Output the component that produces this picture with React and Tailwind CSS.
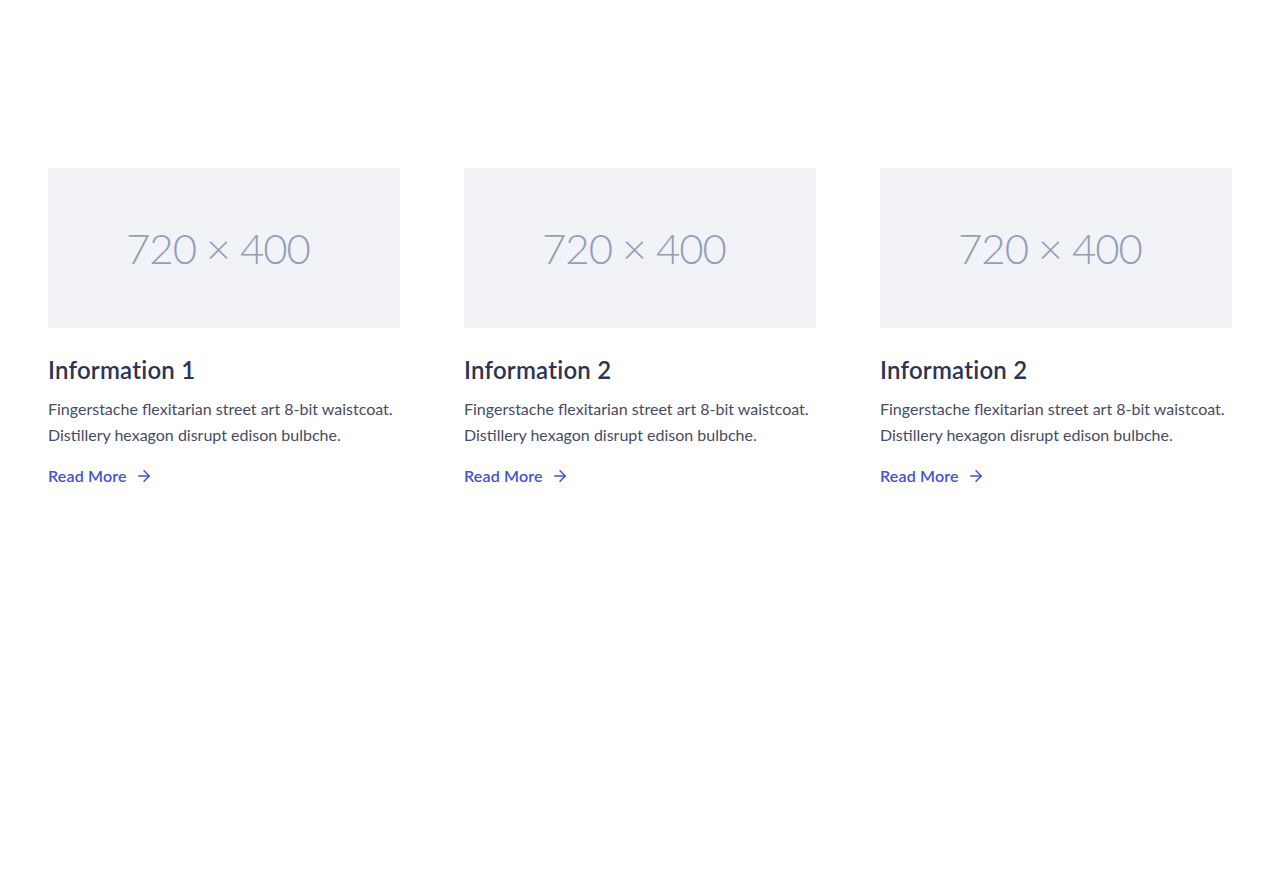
import React from "react";

const cards = ["Information 1", "Information 2", "Information 2"];

function Arrow() {
  return (
    <svg width="18" height="18" viewBox="0 0 24 24" fill="none" stroke="currentColor" strokeWidth="2" strokeLinecap="round" strokeLinejoin="round" className="ml-2">
      <path d="M5 12h14" />
      <path d="M12 5l7 7-7 7" />
    </svg>
  );
}

export default function App() {
  return (
    <div className="min-h-[896px] bg-white" style={{ fontFamily: "Lato, 'Open Sans', sans-serif" }}>
      <div className="px-12 pt-[168px] grid grid-cols-3 gap-16">
        {cards.map((t, i) => (
          <div key={i}>
            <div className="h-[160px] rounded bg-[#f1f3f7] flex items-center justify-center pr-3">
              <span className="text-[42px] font-light text-[#94a0b8] tracking-tight">720 × 400</span>
            </div>
            <h2 className="mt-6 pt-0.5 text-2xl leading-8 font-semibold text-[#2d3452] tracking-[0.01em]">{t}</h2>
            <p className="mt-2.5 text-base leading-[26px] text-[#464c5c]">
              Fingerstache flexitarian street art 8-bit waistcoat. Distillery hexagon disrupt edison bulbche.
            </p>
            <a className="mt-4 flex items-center text-base leading-6 font-semibold text-[#3f51db] tracking-[0.01em]">
              Read More
              <Arrow />
            </a>
          </div>
        ))}
      </div>
    </div>
  );
}
